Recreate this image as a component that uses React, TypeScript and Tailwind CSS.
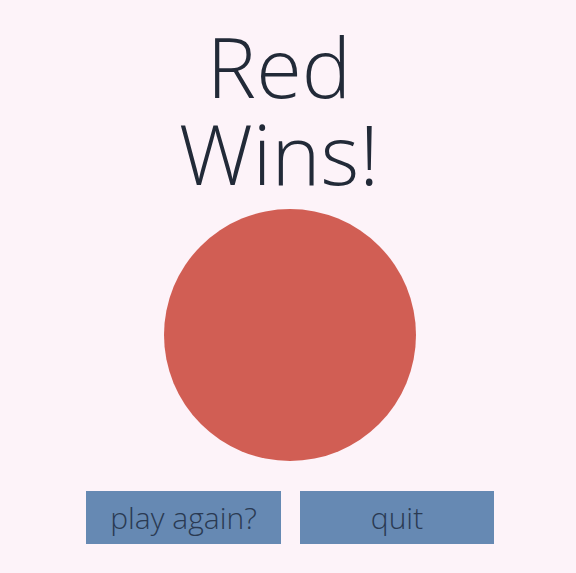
export default function App() {
  return (
    <div
      className="w-[576px] h-[573px] bg-[#fdf3f9] flex flex-col items-center text-[#222a38]"
      style={{ fontFamily: '"Open Sans", "Noto Sans", sans-serif' }}
    >
      {/* Winner banner */}
      <h1 className="mt-[22px] text-[83px] leading-[87px] font-light text-center pr-[18px]">
        Red
        <br />
        Wins!
      </h1>

      {/* Winning piece */}
      <div className="mt-[13px] w-[252px] h-[252px] rounded-full bg-[#d15e54] ml-[4px]" />

      {/* Actions */}
      <div className="mt-[30px] flex gap-[19px] ml-[4px]">
        <button className="w-[195px] h-[53px] bg-[#6689b3] text-[30px] font-light text-[#2a3a52]">
          play again?
        </button>
        <button className="w-[194px] h-[53px] bg-[#6689b3] text-[30px] font-light text-[#2a3a52]">
          quit
        </button>
      </div>
    </div>
  );
}
